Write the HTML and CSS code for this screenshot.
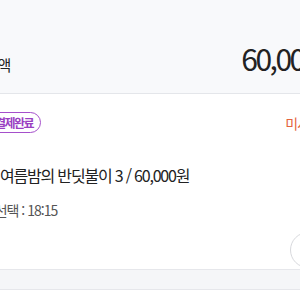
FILE: index.html
```html
<!DOCTYPE html>
<html lang="ko">
<head>
    <meta charset="UTF-8">
    <meta name="viewport" content="width=device-width, initial-scale=1.0">
    <title>주문 상세</title>
    <link rel="stylesheet" href="styles.css">
</head>
<body>
    <div class="page">
        <section class="total">
            <span class="total-label">총 결제금액</span>
            <span class="total-amount">60,000원</span>
        </section>
        <section class="order">
            <div class="order-head">
                <span class="badge">결제완료</span>
                <span class="status">미사용</span>
            </div>
            <p class="order-title">여름밤의 반딧불이 3 / 60,000원</p>
            <p class="order-time">시간 선택 : 18:15</p>
            <div class="order-foot">
                <button class="more" type="button"></button>
            </div>
        </section>
        <div class="gap"></div>
    </div>
</body>
</html>
```

FILE: styles.css
```css
body {
    margin: 0;
    padding: 0;
    overflow: hidden;
    background-color: #fff;
    font-family: "Noto Sans CJK KR", "Noto Sans", sans-serif;
    color: #222;
}
.page {
    width: 436px;
    margin-left: -66px;
}
.total {
    display: flex;
    justify-content: space-between;
    align-items: baseline;
    height: 94px;
    box-sizing: border-box;
    padding: 40px 27px 0 4px;
    background-color: #f8f9fb;
    border-bottom: 1px solid #e4e6ea;
}
.total-label {
    font-size: 15px;
    line-height: 20px;
}
.total-amount {
    font-size: 30px;
    line-height: 36px;
    letter-spacing: -2.5px;
}
.order {
    padding: 18px 44px 0 0;
}
.order-head {
    display: flex;
    justify-content: space-between;
    align-items: center;
    padding: 0 5px 0 52px;
}
.badge {
    font-size: 12px;
    font-weight: bold;
    line-height: 19px;
    letter-spacing: -1.5px;
    padding: 0 7px 0 8px;
    color: #9a3fc2;
    border: 1px solid #a54fcb;
    border-radius: 11px;
}
.status {
    font-size: 14px;
    line-height: 20px;
    letter-spacing: -1px;
    color: #e4633d;
}
.order-title {
    margin: 31px 0 0 66px;
    font-size: 16px;
    line-height: 22px;
    letter-spacing: -1.2px;
}
.order-time {
    margin: 14px 0 0 34px;
    font-size: 14px;
    line-height: 20px;
    letter-spacing: -1px;
    color: #555;
}
.order-foot {
    display: flex;
    justify-content: flex-end;
    margin-top: 12px;
    padding-bottom: 1px;
}
.more {
    width: 36px;
    height: 36px;
    padding: 0;
    border: 1px solid #d8d9dd;
    border-radius: 50%;
    background-color: #fff;
}
.gap {
    height: 19px;
    background-color: #f5f6f8;
    border-top: 1px solid #e6e7eb;
    border-bottom: 1px solid #e6e7eb;
}
```
